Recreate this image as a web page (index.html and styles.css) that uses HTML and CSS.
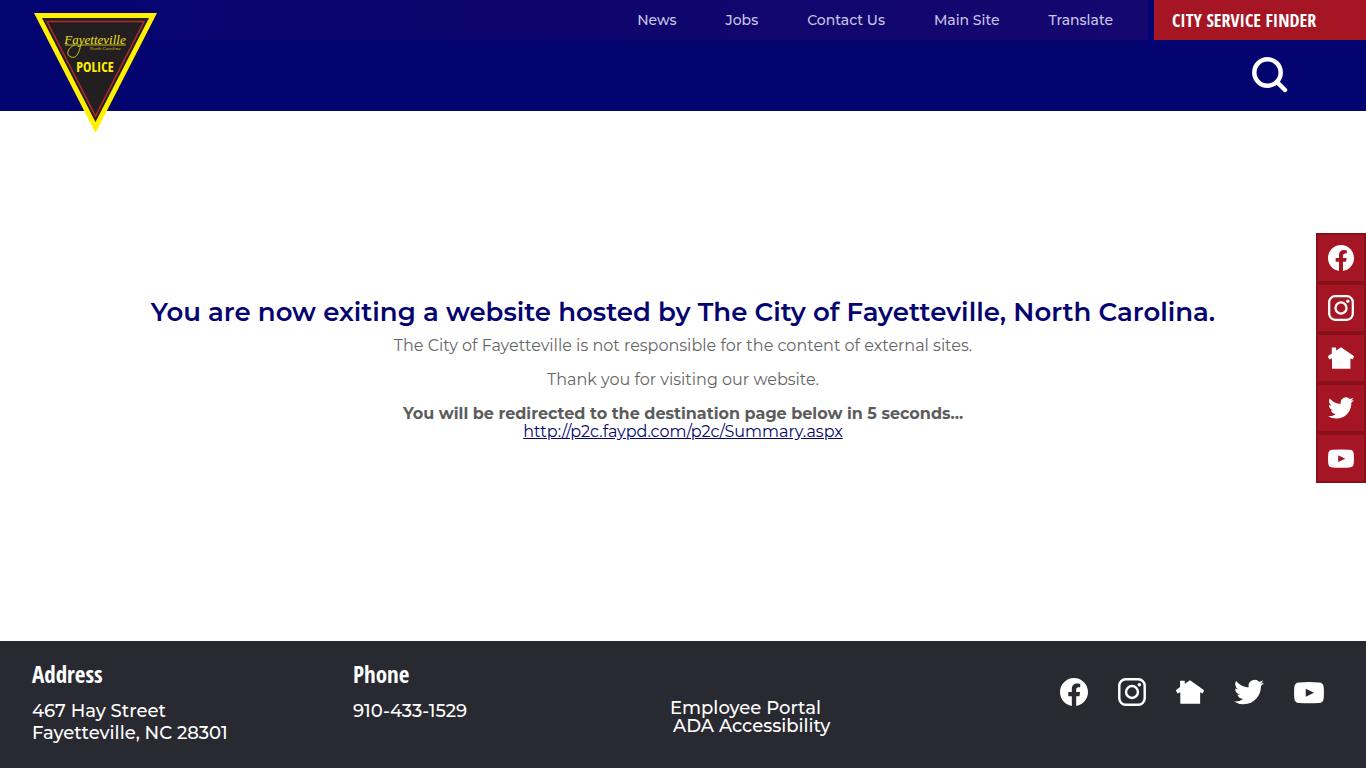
FILE: index.html
```html
<!DOCTYPE html>
<html lang="en">
<head>
<meta charset="utf-8">
<meta name="viewport" content="width=device-width, initial-scale=1">
<title>Fayetteville Police</title>
<link rel="stylesheet" href="styles.css">
</head>
<body>
<svg class="symbols" aria-hidden="true">
  <symbol id="facebook" viewBox="0 0 24 24"><path d="M24 12.07C24 5.41 18.63 0 12 0S0 5.41 0 12.07C0 18.1 4.39 23.1 10.13 24v-8.44H7.08v-3.49h3.05V9.41c0-3.02 1.79-4.7 4.53-4.7 1.31 0 2.68.24 2.68.24v2.97h-1.51c-1.49 0-1.96.93-1.96 1.89v2.26h3.33l-.53 3.49h-2.8V24C19.61 23.1 24 18.1 24 12.07"/></symbol>
  <symbol id="instagram" viewBox="0 0 24 24"><g fill="none" stroke="currentColor" stroke-width="2.1"><rect x="1.1" y="1.1" width="21.8" height="21.8" rx="5.5"/><circle cx="12" cy="12" r="5.1"/></g><circle cx="18.3" cy="5.7" r="1.5"/></symbol>
  <symbol id="home" viewBox="0 0 24 24"><path d="M12 2 16 4.8 23.5 10 24 11 22.6 13.3 20.7 12.3V22H3.7V12.3L1.4 13.3 0 11 .5 9.8 3.5 7.8V2.3H7.5V5Z"/></symbol>
  <symbol id="twitter" viewBox="0 1 24 22"><path d="M23.95 4.57a10 10 0 0 1-2.82.77 4.96 4.96 0 0 0 2.16-2.72c-.95.55-2 .95-3.13 1.18a4.92 4.92 0 0 0-8.38 4.48C7.69 8.09 4.07 6.13 1.64 3.16a4.92 4.92 0 0 0 1.52 6.57 4.9 4.9 0 0 1-2.23-.61v.06a4.92 4.92 0 0 0 3.95 4.83 5 5 0 0 1-2.21.08 4.94 4.94 0 0 0 4.6 3.42A9.87 9.87 0 0 1 0 19.54a14 14 0 0 0 7.55 2.21c9.05 0 14-7.5 14-13.98l-.02-.64a9.9 9.9 0 0 0 2.42-2.56z"/></symbol>
  <symbol id="youtube" viewBox="0 1 24 21"><path fill-rule="evenodd" d="M4 3.8Q12 3.3 20 3.8 23.4 4 23.7 7.2 24.2 12 23.7 16.8 23.4 20 20 20.2 12 20.7 4 20.2.6 20 .3 16.8-.2 12 .3 7.2.6 4 4 3.8ZM9.4 8.9V15.3L16 12.1Z"/></symbol>
</svg>

<header class="header">
  <a class="logo" href="#" aria-label="Fayetteville Police home">
    <svg viewBox="0 0 124 120">
      <path d="M0 0H123L61.5 120Z" fill="#fff100"/>
      <path d="M8 5H115L61.5 109Z" fill="#231f20"/>
      <path d="M13 8.5H110L61.5 103Z" fill="none" stroke="#b3282d" stroke-width="1.5"/>
      <text class="logo-script" x="61" y="31" text-anchor="middle">Fayetteville</text>
      <path d="M47 31C45 41 42 46 37 44 31 42 34 34 41 32M31 32H92" fill="none" stroke="#c9bd1c" stroke-width="1"/>
      <text class="logo-state" x="71" y="37" text-anchor="middle">North Carolina</text>
      <text class="logo-police" x="61" y="59" text-anchor="middle">POLICE</text>
    </svg>
  </a>
  <div class="topbar">
    <nav class="topnav" aria-label="Utility">
      <a href="#">News</a>
      <a href="#">Jobs</a>
      <a href="#">Contact Us</a>
      <a href="#">Main Site</a>
      <a href="#">Translate</a>
    </nav>
    <a class="finder" href="#">CITY SERVICE FINDER</a>
  </div>
  <div class="mainbar">
    <button class="search" type="button" aria-label="Search">
      <svg viewBox="0 0 36 36"><g fill="none" stroke="currentColor" stroke-width="4.5" stroke-linecap="round"><circle cx="15.5" cy="15.5" r="13.2"/><path d="M25.5 25.5 33 33"/></g></svg>
    </button>
  </div>
</header>

<main class="notice">
  <h1>You are now exiting a website hosted by The City of Fayetteville, North Carolina.</h1>
  <p>The City of Fayetteville is not responsible for the content of external sites.</p>
  <p>Thank you for visiting our website.</p>
  <p class="redirect"><strong>You will be redirected to the destination page below in 5 seconds...</strong><br>
  <a href="http://p2c.faypd.com/p2c/Summary.aspx">http://p2c.faypd.com/p2c/Summary.aspx</a></p>
</main>

<nav class="rail" aria-label="Social links">
  <a href="#" aria-label="Facebook"><svg><use href="#facebook"/></svg></a>
  <a href="#" aria-label="Instagram"><svg><use href="#instagram"/></svg></a>
  <a href="#" aria-label="Nextdoor"><svg><use href="#home"/></svg></a>
  <a href="#" aria-label="Twitter"><svg><use href="#twitter"/></svg></a>
  <a href="#" aria-label="YouTube"><svg><use href="#youtube"/></svg></a>
</nav>

<footer class="footer">
  <section>
    <h2>Address</h2>
    <address>467 Hay Street<br>Fayetteville, NC 28301</address>
  </section>
  <section>
    <h2>Phone</h2>
    <p>910-433-1529</p>
  </section>
  <ul class="footer-links">
    <li><a href="#">Employee Portal</a></li>
    <li class="inset"><a href="#">ADA Accessibility</a></li>
  </ul>
  <div class="social">
    <a href="#" aria-label="Facebook"><svg><use href="#facebook"/></svg></a>
    <a href="#" aria-label="Instagram"><svg><use href="#instagram"/></svg></a>
    <a href="#" aria-label="Nextdoor"><svg><use href="#home"/></svg></a>
    <a class="wide" href="#" aria-label="Twitter"><svg><use href="#twitter"/></svg></a>
    <a class="wide" href="#" aria-label="YouTube"><svg><use href="#youtube"/></svg></a>
  </div>
</footer>
</body>
</html>
```
FILE: styles.css
```css
:root {
  --navy: #040470;
  --red: #a51523;
  --body: Montserrat, Inter, sans-serif;
  --narrow: "Open Sans Condensed", "Roboto Condensed", "Liberation Sans Narrow", "Open Sans", sans-serif;
}
* { box-sizing: border-box; }
body {
  display: flex;
  flex-direction: column;
  min-height: 100vh;
  margin: 0;
  background: #fff;
  color: #666;
  font: 16px/18px var(--body);
}
h1, h2, p, ul { margin: 0; }
a { color: inherit; text-decoration: none; }
svg { display: block; fill: currentColor; }
.symbols { position: absolute; width: 0; height: 0; }

.header { position: relative; background: var(--navy); color: #fff; }
.logo { position: absolute; top: 13px; left: 34px; width: 124px; }
.logo-script { font: italic 13px "Liberation Serif", serif; fill: #f0e31c; }
.logo-state { font: italic 5px "Liberation Serif", serif; fill: #c9bd1c; }
.logo-police { font: bold 14px var(--narrow); fill: #fff100; }
.topbar { display: flex; justify-content: flex-end; gap: 6px; height: 40px; }
.topnav {
  display: flex;
  flex: 1;
  align-items: center;
  justify-content: flex-end;
  gap: 49px;
  padding-right: 35px;
  background: linear-gradient(to right, #040470, #0d056d 50%, #160770);
  color: #c9c5e6;
  font-size: 14px;
  font-weight: 500;
}
.finder {
  width: 212px;
  padding-left: 18px;
  background: var(--red);
  font: bold 18px/40px var(--narrow);
  white-space: nowrap;
}
.mainbar { display: flex; justify-content: flex-end; padding: 17px 78px 18px 0; }
.search { width: 36px; height: 36px; padding: 0; border: 0; background: none; color: #fff; }

.notice {
  display: flex;
  flex: 1;
  flex-direction: column;
  justify-content: center;
  gap: 16px;
  padding: 0 16px 16px;
  text-align: center;
}
.notice h1 { margin-bottom: -8px; color: var(--navy); font-size: 26px; font-weight: 600; line-height: 34px; }
.notice strong { color: #5c5c5c; font-weight: 700; }
.redirect a { color: var(--navy); text-decoration: underline; }

.rail { position: fixed; top: 233px; right: 0; width: 50px; color: #fff; }
.rail a { display: grid; place-items: center; height: 50px; border: 2px solid #87101b; background: var(--red); }
.rail svg { width: 26px; height: 26px; }

.footer {
  display: grid;
  grid-template-columns: 321px 317px 1fr auto;
  padding: 19px 42px 24px 32px;
  background: #292931;
  color: #fff;
  font-size: 18px;
  font-weight: 500;
  line-height: 22px;
}
.footer h2 { margin-bottom: 12px; font: bold 23px/28px var(--narrow); }
address { font-style: normal; }
.footer-links { padding: 39px 0 0; list-style: none; line-height: 18px; }
.inset { padding-left: 3px; }
.social { display: flex; align-items: flex-start; gap: 30px; padding-top: 18px; }
.social svg { width: 28px; height: 28px; }
.social .wide svg { width: 30px; height: 28px; }
```
